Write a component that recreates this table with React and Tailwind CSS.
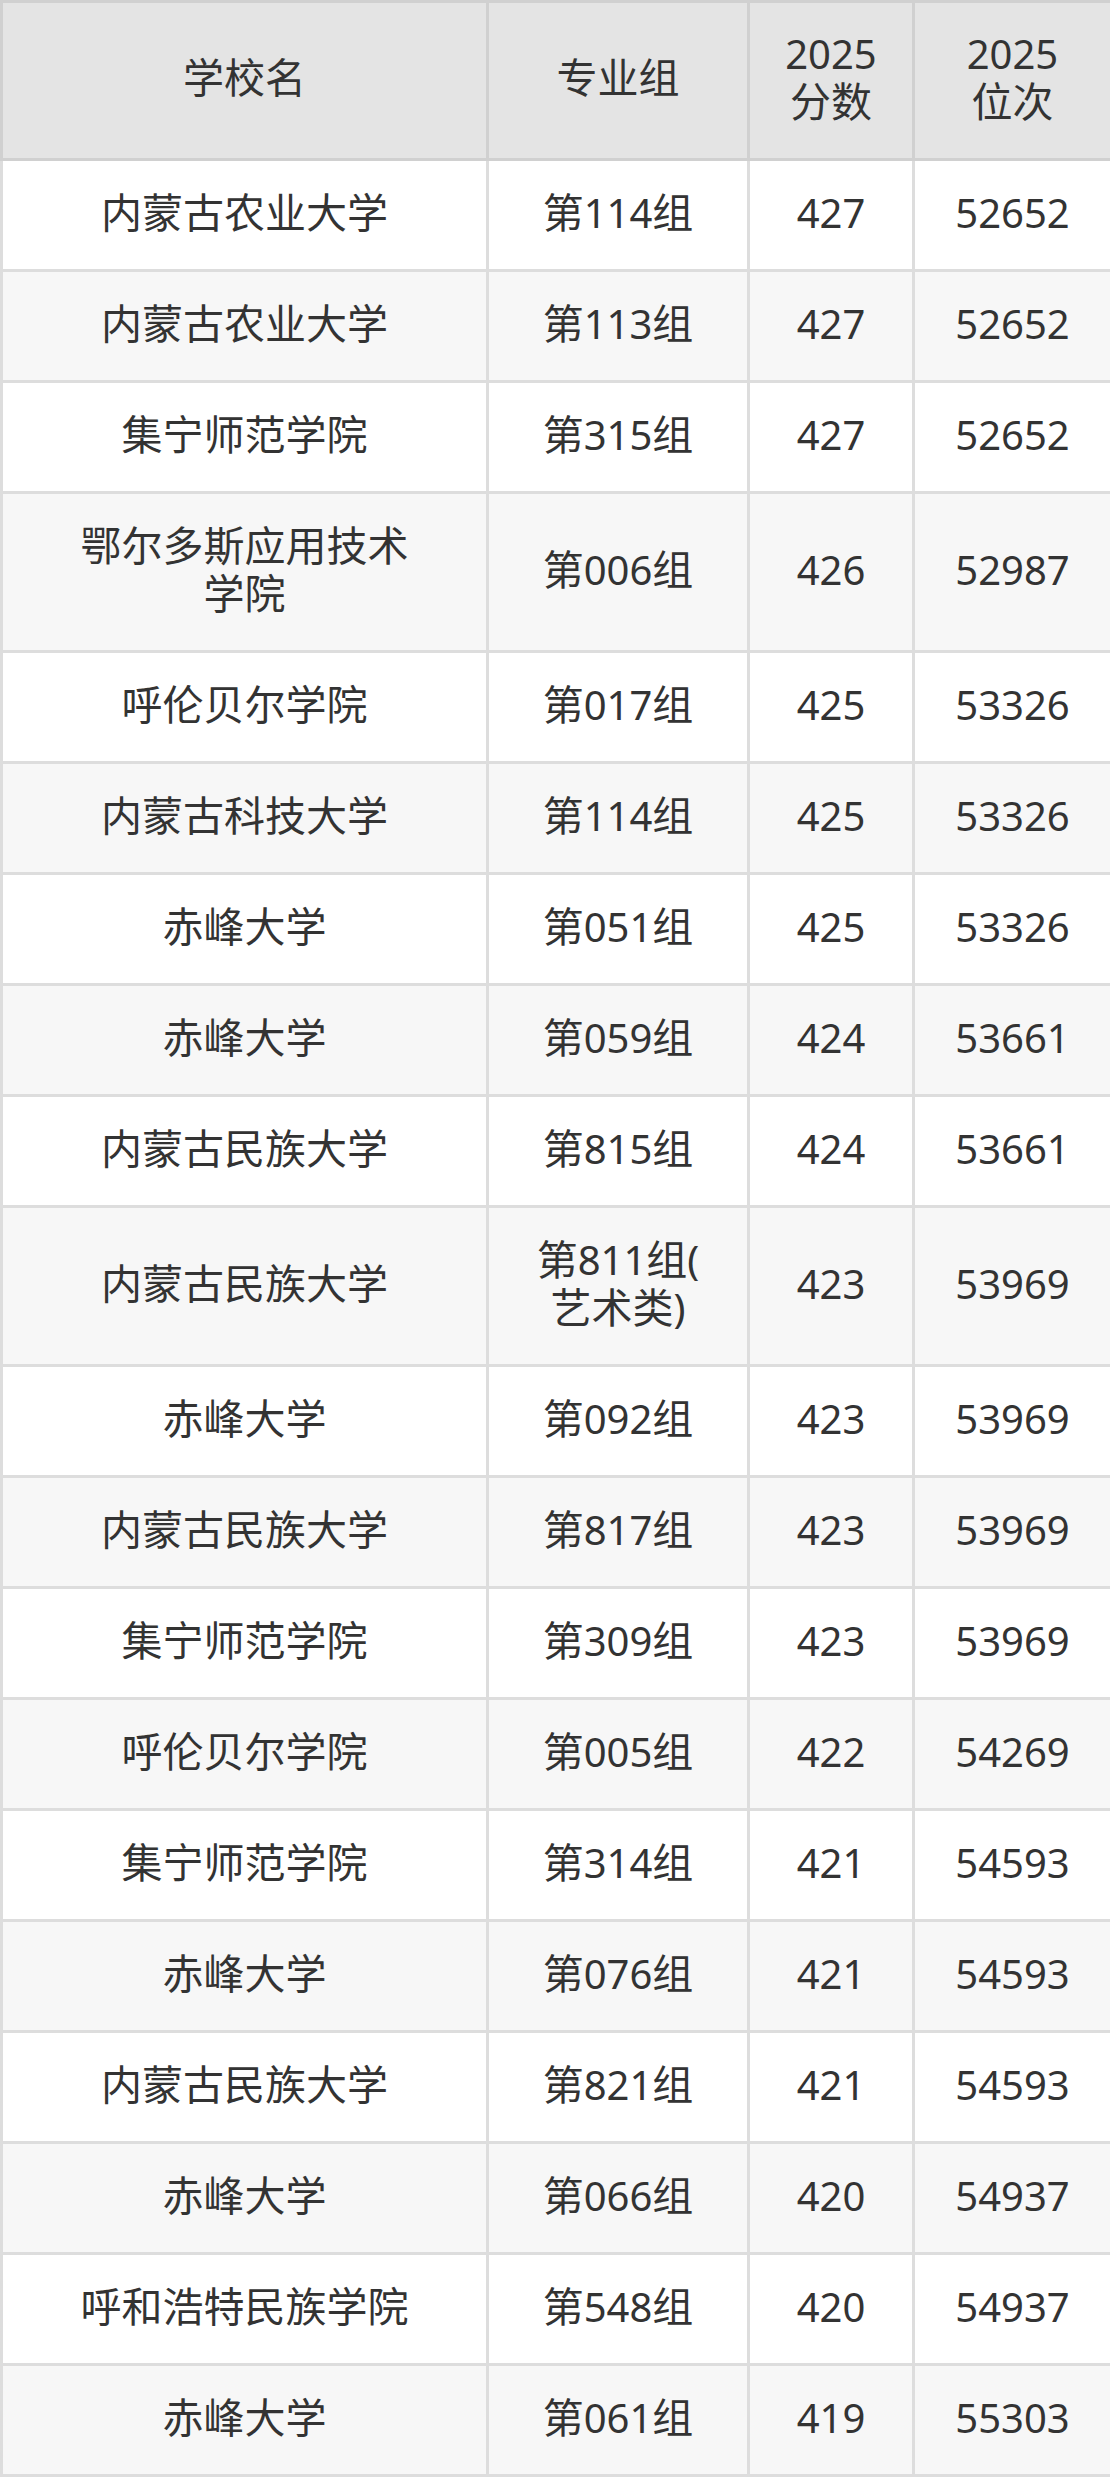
import React from "react";

const rows = [
  ["内蒙古农业大学", "第114组", "427", "52652"],
  ["内蒙古农业大学", "第113组", "427", "52652"],
  ["集宁师范学院", "第315组", "427", "52652"],
  [["鄂尔多斯应用技术", "学院"], "第006组", "426", "52987"],
  ["呼伦贝尔学院", "第017组", "425", "53326"],
  ["内蒙古科技大学", "第114组", "425", "53326"],
  ["赤峰大学", "第051组", "425", "53326"],
  ["赤峰大学", "第059组", "424", "53661"],
  ["内蒙古民族大学", "第815组", "424", "53661"],
  ["内蒙古民族大学", ["第811组(", "艺术类)"], "423", "53969"],
  ["赤峰大学", "第092组", "423", "53969"],
  ["内蒙古民族大学", "第817组", "423", "53969"],
  ["集宁师范学院", "第309组", "423", "53969"],
  ["呼伦贝尔学院", "第005组", "422", "54269"],
  ["集宁师范学院", "第314组", "421", "54593"],
  ["赤峰大学", "第076组", "421", "54593"],
  ["内蒙古民族大学", "第821组", "421", "54593"],
  ["赤峰大学", "第066组", "420", "54937"],
  ["呼和浩特民族学院", "第548组", "420", "54937"],
  ["赤峰大学", "第061组", "419", "55303"],
];

// CJK runs come out a touch wider than the digits in the original
function Txt({ s }) {
  const parts = s.split(/([\u4e00-\u9fff]+)/).filter(Boolean);
  return parts.map((p, i) =>
    /[\u4e00-\u9fff]/.test(p) ? (
      <span key={i} className="text-[41px] leading-none">
        {p}
      </span>
    ) : (
      <span key={i}>{p}</span>
    )
  );
}

function Cell({ value }) {
  if (Array.isArray(value)) {
    return (
      <>
        <Txt s={value[0]} />
        <br />
        <Txt s={value[1]} />
      </>
    );
  }
  return <Txt s={value} />;
}

const th = "border-[3px] border-[#d0d0d0] pt-[27px] pb-[32px] font-normal";

export default function App() {
  return (
    <div className="w-[1110px] bg-white font-['Noto_Sans','Noto_Sans_CJK_SC',sans-serif] text-[40px] leading-[48px] text-[#333]">
      <table className="w-full table-fixed border-collapse text-center">
        <colgroup>
          <col className="w-[486px]" />
          <col className="w-[261px]" />
          <col className="w-[165px]" />
          <col className="w-[198px]" />
        </colgroup>
        <thead>
          <tr className="bg-[#e4e4e4]">
            <th className={th}>
              <Txt s="学校名" />
            </th>
            <th className={th}>
              <Txt s="专业组" />
            </th>
            <th className={th}>
              2025
              <br />
              <Txt s="分数" />
            </th>
            <th className={th}>
              2025
              <br />
              <Txt s="位次" />
            </th>
          </tr>
        </thead>
        <tbody>
          {rows.map((r, i) => (
            <tr key={i} className={i % 2 === 0 ? "bg-white" : "bg-[#f7f7f7]"}>
              {r.map((c, j) => (
                <td key={j} className="border-[3px] border-[#dddddd] pt-[28px] pb-[32px]">
                  <Cell value={c} />
                </td>
              ))}
            </tr>
          ))}
        </tbody>
      </table>
    </div>
  );
}
